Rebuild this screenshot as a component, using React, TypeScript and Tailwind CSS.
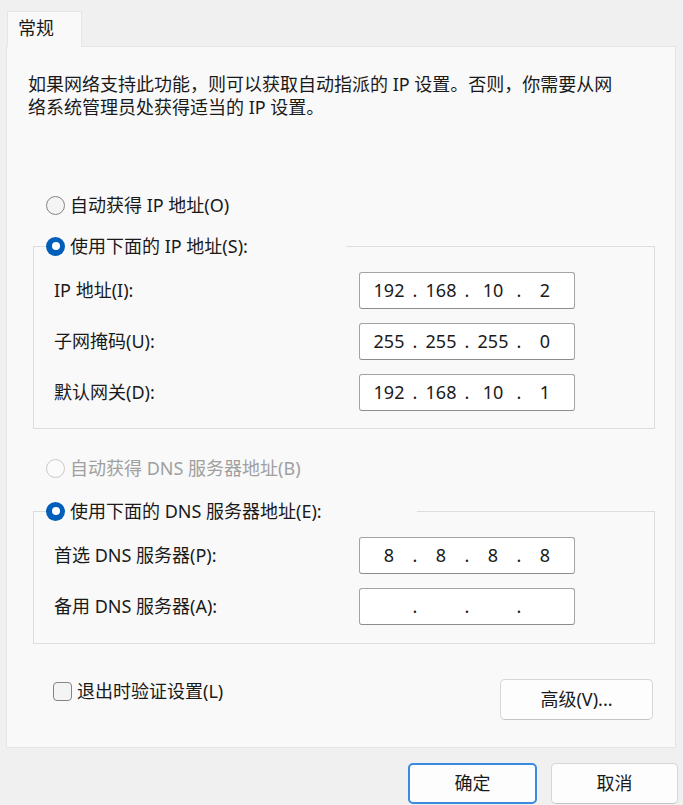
import React, { Fragment } from "react";

function Radio({ checked, disabled }: { checked?: boolean; disabled?: boolean }) {
  if (checked) {
    return (
      <span className="w-[19px] h-[19px] rounded-full bg-[#005fb8] flex items-center justify-center shrink-0">
        <span className="w-[8px] h-[8px] rounded-full bg-white" />
      </span>
    );
  }
  if (disabled) {
    return <span className="w-[19px] h-[19px] rounded-full border border-[#c9c9c9] bg-[#fbfbfb] shrink-0" />;
  }
  return <span className="w-[19px] h-[19px] rounded-full border border-[#858585] bg-[#f4f4f4] shrink-0" />;
}

function IpField({ parts }: { parts: string[] }) {
  return (
    <div className="w-[216px] h-[37px] bg-white border border-[#a3a3a3] border-b-[#8c8c8c] rounded-[3px] flex items-center pl-[6px]">
      {parts.map((p, i) => (
        <Fragment key={i}>
          <span className="w-[46px] text-center">{p}</span>
          {i < 3 && <span className="w-[6px] text-center">.</span>}
        </Fragment>
      ))}
    </div>
  );
}

export default function App() {
  return (
    <div className="w-[683px] h-[805px] bg-[#f0f0f0] overflow-hidden text-[18px] leading-[23px] text-[#1a1a1a] font-['Noto_Sans','Noto_Sans_CJK_SC',sans-serif]">
      <div className="pt-[11px] pl-[7px] flex">
        <div className="w-[75px] h-[36px] -mb-px relative z-10 bg-[#f9f9f9] border border-b-0 border-[#e5e5e5] pl-[10px] pt-[5px]">
          常规
        </div>
      </div>
      <div className="ml-[6px] w-[670px] h-[702px] bg-[#f9f9f9] border border-[#e5e5e5] flex flex-col">
        <div className="pl-[21px] pt-[26px] whitespace-nowrap">
          <div>如果网络支持此功能，则可以获取自动指派的 IP 设置。否则，你需要从网</div>
          <div>络系统管理员处获得适当的 IP 设置。</div>
        </div>

        <div className="mt-[74px] pl-[39px] h-[24px] flex items-center gap-[5px]">
          <Radio />
          <span>自动获得 IP 地址(O)</span>
        </div>

        <fieldset className="mt-[17px] ml-[26px] w-[622px] border border-[#dddddd]">
          <legend className="ml-[12px] w-[300px] h-[24px] flex items-center gap-[5px]">
            <Radio checked />
            <span>使用下面的 IP 地址(S):</span>
          </legend>
          <div className="pt-[14px] pb-[17px] pl-[20px] grid grid-cols-[305px_216px] gap-y-[14px] items-center">
            <span>IP 地址(I):</span>
            <IpField parts={["192", "168", "10", "2"]} />
            <span>子网掩码(U):</span>
            <IpField parts={["255", "255", "255", "0"]} />
            <span>默认网关(D):</span>
            <IpField parts={["192", "168", "10", "1"]} />
          </div>
        </fieldset>

        <div className="mt-[27px] pl-[39px] h-[24px] flex items-center gap-[5px] text-[#a0a0a0]">
          <Radio disabled />
          <span>自动获得 DNS 服务器地址(B)</span>
        </div>

        <fieldset className="mt-[19px] ml-[26px] w-[622px] border border-[#dddddd]">
          <legend className="ml-[12px] w-[371px] h-[24px] flex items-center gap-[5px]">
            <Radio checked />
            <span>使用下面的 DNS 服务器地址(E):</span>
          </legend>
          <div className="pt-[14px] pb-[18px] pl-[20px] grid grid-cols-[305px_216px] gap-y-[14px] items-center">
            <span>首选 DNS 服务器(P):</span>
            <IpField parts={["8", "8", "8", "8"]} />
            <span>备用 DNS 服务器(A):</span>
            <IpField parts={["", "", "", ""]} />
          </div>
        </fieldset>

        <div className="mt-[35px] pl-[46px] pr-[22px] flex justify-between items-start">
          <label className="h-[24px] flex items-center gap-[5px]">
            <span className="w-[19px] h-[19px] rounded-[4px] border border-[#858585] bg-[#f4f4f4] shrink-0" />
            <span>退出时验证设置(L)</span>
          </label>
          <button className="w-[153px] h-[41px] rounded-[5px] border border-[#d6d6d6] border-b-[#c4c4c4] bg-[#fdfdfd] flex items-center justify-center">
            高级(V)...
          </button>
        </div>
      </div>

      <div className="mt-[15px] pr-[5px] flex justify-end gap-[14px]">
        <button className="w-[129px] h-[41px] rounded-[5px] border-2 border-[#3a8ae0] bg-[#fdfdfd] flex items-center justify-center">
          确定
        </button>
        <button className="w-[127px] h-[41px] rounded-[5px] border border-[#d6d6d6] border-b-[#c4c4c4] bg-[#fdfdfd] flex items-center justify-center">
          取消
        </button>
      </div>
    </div>
  );
}
